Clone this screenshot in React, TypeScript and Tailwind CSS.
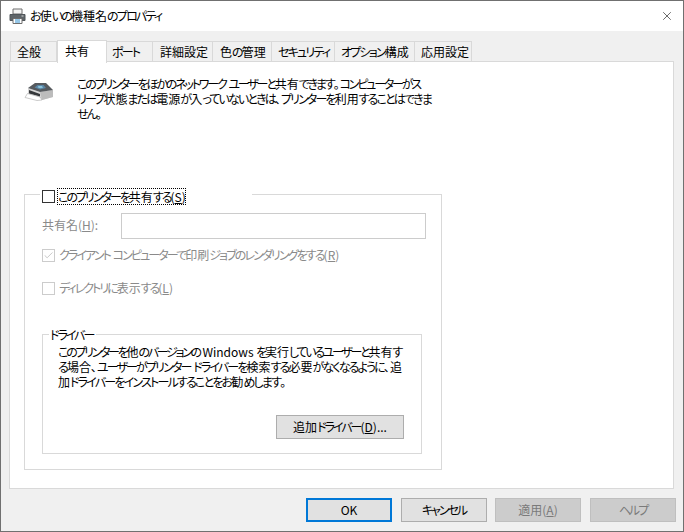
import type { ReactNode } from "react";
import { X, Check } from "lucide-react";

const tabs = [
    { label: "全般", box: "w-[47px] pl-[6px]" },
    { label: "共有", box: "w-[50px] pl-[7px]", active: true },
    { label: "ポート", box: "w-[46px] pl-[5px]" },
    { label: "詳細設定", box: "w-[60px] pl-[7px]" },
    { label: "色の管理", box: "w-[59px] pl-[7px]" },
    { label: "セキュリティ", box: "w-[63px] pl-[6px]" },
    { label: "オプション構成", box: "w-[80px] pl-[6px]" },
    { label: "応用設定", box: "w-[57px] pl-[6px]" },
];

// the reference font has narrow kana, so only kana runs get tightened
function Jp({ text, spacing = "tracking-[-2px]" }: { text: string; spacing?: string }) {
    return (
        <>
            {text.split(/([\u3041-\u30ff]+)/).map((part, i) =>
                i % 2 === 1 ? (
                    <span key={i} className={spacing}>
                        {part}
                    </span>
                ) : (
                    part
                ),
            )}
        </>
    );
}

function TitlePrinter() {
    return (
        <svg width="17" height="16" viewBox="0 0 17 16" className="shrink-0">
            <path d="M4 1h9v5H4z" fill="#f4f4f4" stroke="#6e6e6e" />
            <path d="M1 6.5h15v6h-3v-2H4v2H1z" fill="#5f6569" stroke="#50565a" />
            <path d="M4 10.5h9v5H4z" fill="#ffffff" stroke="#6e6e6e" />
            <path d="M6 12h5M6 14h5" stroke="#2f8fd0" />
            <path d="M12.5 8h2" stroke="#d8d8d8" />
        </svg>
    );
}

function PanelPrinter() {
    return (
        <svg width="34" height="26" viewBox="0 0 34 26" className="shrink-0">
            <path d="M6 10L18 14L31 12V19L20 22L6 19z" fill="#d6d6d6" />
            <path d="M18 14L31 12V19L20 22z" fill="#bcbcbc" />
            <path d="M13 5L24 5L31 12L18 14L6 10z" fill="#565a5e" />
            <path d="M15.5 7L21.5 7L24 10L18 11.5L12.5 9.5z" fill="#5a86a6" />
            <path d="M16.5 8L20 8L21 9.7L18 10.3L15.5 9.3z" fill="#8cc4da" />
            <path d="M7 12L18 16V18.5L7 15.5z" fill="#34373a" />
            <path d="M5.5 15.5L18 19L20 22L15 22.5L3 19.5z" fill="#ffffff" stroke="#a8a8a8" strokeWidth="0.6" />
        </svg>
    );
}

function CheckBox({ state }: { state: "active" | "checked" | "disabled" }) {
    if (state === "active") {
        return <span className="w-[13px] h-[13px] shrink-0 border border-[#333333] bg-white" />;
    }
    return (
        <span className="w-[13px] h-[13px] shrink-0 border border-[#cccccc] bg-white flex items-center justify-center">
            {state === "checked" && <Check size={11} strokeWidth={1.5} className="text-[#b0b0b0]" />}
        </span>
    );
}

function DialogButton({ children, variant, className }: { children: ReactNode; variant?: "default" | "disabled"; className?: string }) {
    const look =
        variant === "default"
            ? "border-2 border-[#0078d7] bg-[#e1e1e1] text-black"
            : variant === "disabled"
              ? "border border-[#bfbfbf] bg-[#cccccc] text-[#7a7a7a]"
              : "border border-[#adadad] bg-[#e1e1e1] text-black";
    return <div className={`h-[24px] pb-[2px] flex items-center justify-center whitespace-nowrap ${look} ${className ?? ""}`}>{children}</div>;
}

export default function App() {
    return (
        <div className="w-[684px] h-[532px] overflow-hidden border border-[#707070] bg-[#f0f0f0] text-[12px] leading-[15px] text-black font-['Noto_Sans_CJK_JP','Noto_Sans',sans-serif] [font-feature-settings:'palt']">
            {/* Title bar */}
            <div className="h-[30px] bg-white flex items-center pl-[8px] pr-[9px]">
                <TitlePrinter />
                <span className="ml-[4px] pb-[2px] whitespace-nowrap">
                    <Jp text="お使いの機種名のプロパティ" spacing="tracking-[-1.8px]" />
                </span>
                <X size={14} strokeWidth={1} className="ml-auto text-black" />
            </div>

            {/* Tabs */}
            <div className="h-[31px] pl-[9px] flex items-end">
                {tabs.map((tab) => (
                    <div
                        key={tab.label}
                        className={
                            tab.active
                                ? `${tab.box} h-[23px] relative z-10 -mb-px bg-white border border-b-0 border-[#d9d9d9] flex items-center pb-[4px] whitespace-nowrap`
                                : `${tab.box} h-[21px] border border-b-0 border-l-0 first:border-l border-[#d9d9d9] flex items-center pb-[2px] whitespace-nowrap`
                        }
                    >
                        <span>
                            <Jp text={tab.label} spacing="tracking-[-1.8px]" />
                        </span>
                    </div>
                ))}
            </div>

            {/* Panel */}
            <div className="ml-[8px] -mt-px w-[665px] h-[428px] bg-white border border-[#d9d9d9]">
                <div className="flex pl-[12px] pt-[14px] h-[132px]">
                    <div className="pt-[2px]">
                        <PanelPrinter />
                    </div>
                    <p className="ml-[21px] whitespace-nowrap">
                        <Jp text="このプリンターをほかのネットワーク ユーザーと共有できます。コンピューターがス" spacing="tracking-[-2.17px]" />
                        <br />
                        <Jp text="リープ状態または電源が入っていないときは、プリンターを利用することはできま" spacing="tracking-[-1.86px]" />
                        <br />
                        <Jp text="せん。" />
                    </p>
                </div>

                {/* Sharing group */}
                <div className="ml-[14px] w-[418px] h-[276px] border border-[#d9d9d9]">
                    <div className="-mt-[7px] ml-[15px] w-[212px] h-[17px] bg-white pl-[2px] flex items-center">
                        <CheckBox state="active" />
                        <span className="ml-[2px] w-[129px] pl-px h-[17px] flex items-center whitespace-nowrap outline-1 outline-dotted outline-offset-[-1px] outline-black">
                            <span>
                                <Jp text="このプリンターを共有する" />(<u>S</u>)
                            </span>
                        </span>
                    </div>

                    <div className="mt-[8px] ml-[17px] flex items-center text-[#8a8a8a]">
                        <span className="w-[79px] pb-[3px]">
                            共有名(<u>H</u>):
                        </span>
                        <div className="w-[305px] h-[26px] border border-[#cccccc] bg-white" />
                    </div>

                    <div className="mt-[10px] ml-[17px] h-[13px] flex items-center gap-[4px] text-[#8a8a8a] whitespace-nowrap">
                        <CheckBox state="checked" />
                        <span className="pb-[2px]">
                            <Jp text="クライアント コンピューターで印刷ジョブのレンダリングをする" spacing="tracking-[-1.9px]" />(<u>R</u>)
                        </span>
                    </div>

                    <div className="mt-[20px] ml-[17px] h-[13px] flex items-center gap-[4px] text-[#8a8a8a] whitespace-nowrap">
                        <CheckBox state="disabled" />
                        <span className="pb-[2px]">
                            <Jp text="ディレクトリに表示する" />(<u>L</u>)
                        </span>
                    </div>

                    {/* Driver group */}
                    <div className="mt-[39px] ml-[17px] w-[380px] h-[120px] border border-[#d9d9d9]">
                        <div className="-mt-[9px] ml-[6px] w-fit h-[16px] pl-px pr-[3px] bg-white flex items-center">
                            <span>
                                <Jp text="ドライバー" />
                            </span>
                        </div>
                        <p className="mt-[2px] ml-[15px] whitespace-nowrap">
                            <Jp text="このプリンターを他のバージョンの Windows を実行しているユーザーと共有す" spacing="tracking-[-2.3px]" />
                            <br />
                            <Jp text="る場合、ユーザーがプリンター ドライバーを検索する必要がなくなるように、追" spacing="tracking-[-1.86px]" />
                            <br />
                            <Jp text="加ドライバーをインストールすることをお勧めします。" spacing="tracking-[-1.8px]" />
                        </p>
                        <div className="mt-[26px] mr-[17px] flex justify-end">
                            <DialogButton className="w-[128px]">
                                <span>
                                    <Jp text="追加ドライバー" />(<u>D</u>)...
                                </span>
                            </DialogButton>
                        </div>
                    </div>
                </div>
            </div>

            {/* Footer buttons */}
            <div className="mt-[9px] pr-[7px] flex justify-end">
                <DialogButton variant="default" className="w-[86px] mr-[9px]">
                    OK
                </DialogButton>
                <DialogButton className="w-[86px] mr-[8px]">
                    <span>
                        <Jp text="キャンセル" />
                    </span>
                </DialogButton>
                <DialogButton variant="disabled" className="w-[86px] mr-[9px]">
                    <span>
                        適用(<u>A</u>)
                    </span>
                </DialogButton>
                <DialogButton variant="disabled" className="w-[86px]">
                    <span>
                        <Jp text="ヘルプ" />
                    </span>
                </DialogButton>
            </div>
        </div>
    );
}
